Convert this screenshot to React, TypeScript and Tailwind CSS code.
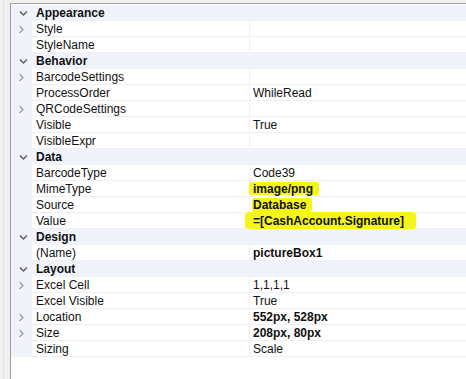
import React from 'react';

type Row =
  | { kind: 'cat'; label: string }
  | { kind: 'prop'; label: string; value?: string; bold?: boolean; expand?: boolean; mark?: 'a' | 'b' | 'c' };

const rows: Row[] = [
  { kind: 'cat', label: 'Appearance' },
  { kind: 'prop', label: 'Style', expand: true },
  { kind: 'prop', label: 'StyleName' },
  { kind: 'cat', label: 'Behavior' },
  { kind: 'prop', label: 'BarcodeSettings', expand: true },
  { kind: 'prop', label: 'ProcessOrder', value: 'WhileRead' },
  { kind: 'prop', label: 'QRCodeSettings', expand: true },
  { kind: 'prop', label: 'Visible', value: 'True' },
  { kind: 'prop', label: 'VisibleExpr' },
  { kind: 'cat', label: 'Data' },
  { kind: 'prop', label: 'BarcodeType', value: 'Code39' },
  { kind: 'prop', label: 'MimeType', value: 'image/png', bold: true, mark: 'a' },
  { kind: 'prop', label: 'Source', value: 'Database', bold: true, mark: 'b' },
  { kind: 'prop', label: 'Value', value: '=[CashAccount.Signature]', bold: true, mark: 'c' },
  { kind: 'cat', label: 'Design' },
  { kind: 'prop', label: '(Name)', value: 'pictureBox1', bold: true },
  { kind: 'cat', label: 'Layout' },
  { kind: 'prop', label: 'Excel Cell', value: '1,1,1,1', expand: true },
  { kind: 'prop', label: 'Excel Visible', value: 'True' },
  { kind: 'prop', label: 'Location', value: '552px, 528px', bold: true, expand: true },
  { kind: 'prop', label: 'Size', value: '208px, 80px', bold: true, expand: true },
  { kind: 'prop', label: 'Sizing', value: 'Scale' },
];

const Chevron = ({ down }: { down?: boolean }) => (
  <svg width="9" height="9" viewBox="0 0 9 9" className="block">
    {down ? (
      <path d="M1 2.5 L4.5 6 L8 2.5" fill="none" stroke="#5a5a5a" strokeWidth="1.3" />
    ) : (
      <path d="M2.5 1 L6 4.5 L2.5 8" fill="none" stroke="#9a9a9a" strokeWidth="1.2" />
    )}
  </svg>
);

const markClass: Record<string, string> = {
  a: 'bg-[#f5f51a] -ml-[4px] pl-[4px] pr-[6px] h-[13px] rounded-[3px]',
  b: 'bg-[#f5f51a] -ml-[1px] pl-[1px] pr-[6px] h-[14px] rounded-[3px]',
  c: 'bg-[#f5f51a] -ml-[8px] pl-[8px] pr-[12px] h-[17px] rounded-[4px]',
};

export default function App() {
  return (
    <div
      className="w-[466px] h-[379px] bg-[#f0f0f0] flex overflow-hidden text-[12px] text-[#111]"
      style={{ fontFamily: '"Liberation Sans", Arial, sans-serif' }}
    >
      <div className="w-[10px] flex shrink-0">
        <div className="w-[3px]" />
        <div className="w-px bg-[#e2e2e2]" />
      </div>
      <div className="flex-1 flex flex-col pt-[3px]">
        <div className="flex-1 bg-white border-l border-t border-[#a0a0a0] pt-px">
          {rows.map((r, i) =>
            r.kind === 'cat' ? (
              <div key={i} className="h-[16px] flex items-center bg-[#f0f4fa]">
                <div className="w-[24px] flex justify-center pl-[1px]">
                  <Chevron down />
                </div>
                <span className="font-bold pl-[1px]">{r.label}</span>
              </div>
            ) : (
              <div key={i} className="h-[16px] flex">
                <div className="w-[21px] bg-[#f0f4fa] flex items-center justify-center">
                  {r.expand && <Chevron />}
                </div>
                <div className="w-[217px] pl-[4px] flex items-center border-b border-[#f0f0f0]">
                  {r.label}
                </div>
                <div className="flex-1 flex items-center pl-[3px] border-l border-b border-[#f0f0f0]">
                  {r.value && (
                    <span
                      className={`flex items-center ${r.bold ? 'font-bold' : ''} ${r.mark ? markClass[r.mark] : ''}`}
                    >
                      {r.value}
                    </span>
                  )}
                </div>
              </div>
            )
          )}
        </div>
      </div>
    </div>
  );
}
